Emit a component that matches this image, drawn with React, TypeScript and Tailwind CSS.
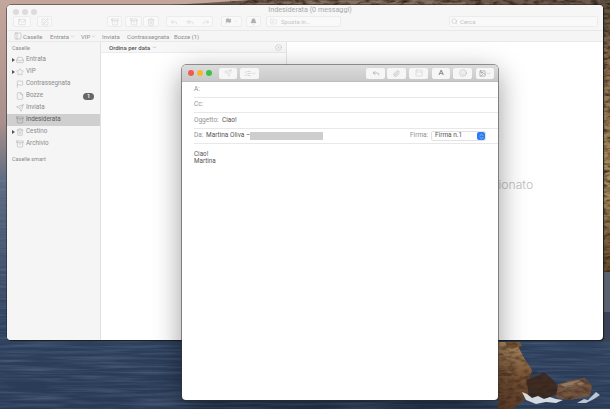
import React from "react";
import {
  Mail, SquarePen, Archive, Trash2, Reply, ReplyAll, Forward, Flag, Bell, FolderInput, Search,
  PanelLeft, Inbox, Star, File, Send, Paperclip, Smile, Image, ListChecks, CircleX, ChevronDown,
  ChevronsUpDown, PanelTop,
} from "lucide-react";

function Wallpaper() {
  return (
    <svg className="absolute inset-0" width="610" height="409" viewBox="0 0 610 409">
      <defs>
        <linearGradient id="sky" x1="0" y1="0" x2="0" y2="1">
          <stop offset="0" stopColor="#c4a79b" />
          <stop offset="0.3" stopColor="#a8908c" />
          <stop offset="0.45" stopColor="#5c6a80" />
          <stop offset="0.8" stopColor="#2d405d" />
          <stop offset="1" stopColor="#293a55" />
        </linearGradient>
        <linearGradient id="rockR" x1="0" y1="0" x2="0" y2="1">
          <stop offset="0" stopColor="#5a4b3c" />
          <stop offset="0.25" stopColor="#8f7250" />
          <stop offset="0.7" stopColor="#ab9060" />
          <stop offset="1" stopColor="#64482e" />
        </linearGradient>
        <linearGradient id="bigRock" x1="0" y1="0" x2="0" y2="1">
          <stop offset="0" stopColor="#b08d62" />
          <stop offset="0.5" stopColor="#7a5436" />
          <stop offset="1" stopColor="#5e3d2a" />
        </linearGradient>
        <filter id="waves" x="0" y="0" width="100%" height="100%" colorInterpolationFilters="sRGB">
          <feTurbulence type="fractalNoise" baseFrequency="0.015 0.35" numOctaves="3" seed="4" />
          <feColorMatrix type="matrix" values="0 0 0 0 0.50  0 0 0 0 0.58  0 0 0 0 0.70  1.6 0 0 0 -0.62" />
        </filter>
        <filter id="mottle" x="0" y="0" width="100%" height="100%" colorInterpolationFilters="sRGB">
          <feTurbulence type="fractalNoise" baseFrequency="0.12 0.3" numOctaves="3" seed="9" />
          <feColorMatrix type="matrix" values="0 0 0 0 0.16  0 0 0 0 0.11  0 0 0 0 0.08  2.0 0 0 0 -0.8" />
        </filter>
        <clipPath id="rocks">
          <path d="M498 342 L516 342 L524 358 L532 370 L545 373 L553 380 L558 384 L572 380 L585 378 L592 386 L590 396 L570 400 L530 398 L528 398 L512 409 L498 409 Z" />
        </clipPath>
      </defs>
      <rect width="610" height="409" fill="url(#sky)" />
      <rect x="0" y="180" width="610" height="229" filter="url(#waves)" opacity="0.4" />
      <path d="M170 5 L205 3 L250 0 L610 0 L610 5 Z" fill="#6d5a4c" />
      <path d="M225 5 L300 1 L420 0 L480 3 L520 5 Z" fill="#86705f" />
      <rect x="600" y="0" width="10" height="272" fill="url(#rockR)" />
      <rect x="600" y="0" width="10" height="272" filter="url(#mottle)" />
      <rect x="230" y="0" width="380" height="5" filter="url(#mottle)" />
      <rect x="603" y="272" width="7" height="40" fill="#59616e" />
      <rect x="603" y="312" width="7" height="30" fill="#3a4356" />
      <path d="M498 342 L516 342 L524 358 L532 370 L528 385 L528 398 L512 409 L498 409 Z" fill="url(#bigRock)" />
      <path d="M505 342 L520 342 L522 346 L512 349 L507 347 Z" fill="#7b5838" />
      <path d="M526 380 L545 373 L553 380 L560 392 L548 398 L530 398 Z" fill="#3f2c23" />
      <path d="M556 398 L558 384 L572 380 L585 378 L592 386 L590 396 L570 400 Z" fill="#755640" />
      <path d="M560 384 L580 380 L584 384 L566 388 Z" fill="#947a60" />
      <g clipPath="url(#rocks)">
        <rect x="498" y="342" width="100" height="67" filter="url(#mottle)" opacity="0.6" />
      </g>
      <path d="M522 392 L527 394 L532 398 L538 396 L544 399 L550 397 L556 399 L563 400 L556 403 L546 402 L536 404 L526 400 Z" fill="#d5dbe2" />
      <path d="M577 403 L584 399 L588 400 L592 396 L596 392 L600 395 L594 399 L586 403 Z" fill="#bcc6d2" />
    </svg>
  );
}

const T = "font-['Roboto','Liberation_Sans',sans-serif]";

function ToolBtn({ w, children }: { w: string; children?: React.ReactNode }) {
  return (
    <div className={`${w} h-[11px] flex items-center justify-center gap-px rounded-[2px] border border-[#ececec] bg-[#f9f9f9] text-[#b5b5b5]`}>
      {children}
    </div>
  );
}

function SideRow({ icon, label, arrow, active, badge }: { icon: React.ReactNode; label: string; arrow?: boolean; active?: boolean; badge?: string }) {
  return (
    <div className={`h-[12px] flex items-center pl-[3px] pr-[6px] ${active ? "bg-[#cfcfcf]" : ""}`}>
      <div className="w-[6px] flex justify-center">
        {arrow && <div className="w-0 h-0 border-y-[2.5px] border-y-transparent border-l-[3px] border-l-[#555]" />}
      </div>
      <div className={`w-[8px] flex justify-center ${active ? "text-[#666]" : "text-[#8a8a8a]"}`}>{icon}</div>
      <span className={`ml-[2px] text-[6.3px] ${active ? "text-[#5c5c5c]" : "text-[#8c8c8c]"}`}>{label}</span>
      {badge && (
        <span className="ml-auto w-[11px] h-[7px] rounded-full bg-[#666] text-white text-[5.5px] font-semibold flex items-center justify-center">{badge}</span>
      )}
    </div>
  );
}

function FieldRow({ children, h = "h-[15px]" }: { children?: React.ReactNode; h?: string }) {
  return <div className={`${h} ml-[12px] flex items-center whitespace-nowrap border-b border-[#e8e8e8]`}>{children}</div>;
}

function ComposeBtn({ w = "w-[19px]", children }: { w?: string; children: React.ReactNode }) {
  return (
    <div className={`${w} h-[11px] rounded-[2px] bg-[#f6f6f6] flex items-center justify-center text-[#8c8c8c]`}>{children}</div>
  );
}

export default function App() {
  const ic = { size: 8, strokeWidth: 1 };
  const sb = { size: 8, strokeWidth: 1 };
  return (
    <div className={`relative w-[610px] h-[409px] overflow-hidden ${T}`}>
      <Wallpaper />

      {/* Mail main window */}
      <div className="absolute left-[7px] top-[5px] w-[596px] h-[335px] rounded-[4px] overflow-hidden bg-white flex flex-col shadow-[0_0_0_0.5px_#222,1px_1px_1px_#1a1a1a]">
        <div className="h-[25px] bg-[#f6f6f6] relative flex items-end pb-[3px] pl-[6px]">
          <div className="absolute left-[6px] top-[4px] flex gap-[3px]">
            <div className="w-[6px] h-[6px] rounded-full bg-[#dcdcdc]" />
            <div className="w-[6px] h-[6px] rounded-full bg-[#dcdcdc]" />
            <div className="w-[6px] h-[6px] rounded-full bg-[#dcdcdc]" />
          </div>
          <div className="absolute left-0 right-0 top-[1px] h-[8px] pl-[10px] flex items-center justify-center text-[7.2px] text-[#aaaaaa]">
            Indesiderata (0 messaggi)
          </div>
          <ToolBtn w="w-[18px] ml-[0px]"><Mail {...ic} /></ToolBtn>
          <ToolBtn w="w-[15px] ml-[6px]"><SquarePen {...ic} /></ToolBtn>
          <ToolBtn w="w-[15px] ml-[55px]"><Archive {...ic} /></ToolBtn>
          <ToolBtn w="w-[17px] ml-[3px]"><Archive {...ic} /></ToolBtn>
          <ToolBtn w="w-[16px] ml-[1px]"><Trash2 {...ic} /></ToolBtn>
          <ToolBtn w="w-[47px] ml-[7px]">
            <div className="flex gap-[8px]"><Reply {...ic} /><ReplyAll {...ic} /><Forward {...ic} /></div>
          </ToolBtn>
          <ToolBtn w="w-[21px] ml-[8px]"><Flag size={7} strokeWidth={1} fill="#b0b0b0" /><ChevronDown size={5} strokeWidth={1} /></ToolBtn>
          <ToolBtn w="w-[15px] ml-[4px]"><Bell size={7} strokeWidth={1} fill="#b0b0b0" /></ToolBtn>
          <div className="w-[75px] h-[11px] ml-[5px] rounded-[2px] border border-[#ececec] bg-[#f9f9f9] flex items-center pl-[3px] gap-[4px] text-[#c4c4c4]">
            <FolderInput size={7} strokeWidth={1} />
            <span className="text-[6px]">Sposta in...</span>
          </div>
          <div className="w-[149px] h-[11px] ml-[108px] rounded-[2px] border border-[#ececec] bg-[#f9f9f9] flex items-center pl-[1px] gap-[2px] text-[#b5b5b5]">
            <Search size={7} strokeWidth={1.4} />
            <span className="text-[6px] text-[#c4c4c4]">Cerca</span>
          </div>
        </div>

        <div className="h-[12px] bg-[#f5f5f5] border-y border-[#e8e8e8] flex items-center text-[6px] text-[#8e8e8e]">
          <PanelLeft size={8} strokeWidth={1} className="ml-[7px] mr-[1px]" />
          <span className="w-[27px]">Caselle</span>
          <span className="w-[31px] flex items-center">Entrata<ChevronDown size={5} strokeWidth={1.2} className="ml-[1px]" /></span>
          <span className="w-[21px] flex items-center">VIP<ChevronDown size={5} strokeWidth={1.2} className="ml-[1px]" /></span>
          <span className="w-[25px]">Inviata</span>
          <span className="w-[47px]">Contrassegnata</span>
          <span>Bozze (1)</span>
        </div>

        <div className="flex-1 flex min-h-0">
          <div className="w-[94px] bg-[#f5f5f5] border-r border-[#e2e2e2] pt-[1px]">
            <div className="h-[11px] pl-[5px] flex items-center text-[5.5px] text-[#8a8a8a]">Caselle</div>
            <SideRow icon={<Inbox {...sb} />} label="Entrata" arrow />
            <SideRow icon={<Star {...sb} />} label="VIP" arrow />
            <SideRow icon={<Flag {...sb} />} label="Contrassegnata" />
            <SideRow icon={<File {...sb} />} label="Bozze" badge="1" />
            <SideRow icon={<Send {...sb} />} label="Inviata" />
            <SideRow icon={<Archive {...sb} />} label="Indesiderata" active />
            <SideRow icon={<Trash2 {...sb} />} label="Cestino" arrow />
            <SideRow icon={<Archive {...sb} />} label="Archivio" />
            <div className="h-[11px] mt-[4px] pl-[5px] flex items-center text-[5.5px] text-[#8a8a8a]">Caselle smart</div>
          </div>
          <div className="w-[186px] border-r border-[#e6e6e6] flex flex-col">
            <div className="h-[11px] bg-[#f7f7f7] border-b border-[#ececec] flex items-center pl-[8px] pr-[4px] text-[6px] font-medium text-[#555]">
              Ordina per data
              <ChevronDown size={5} strokeWidth={1.4} className="ml-[2px]" />
              <CircleX size={7} strokeWidth={1} className="ml-auto text-[#999]" />
            </div>
          </div>
          <div className="flex-1 flex items-center justify-center pb-[11px] font-['Inter',sans-serif] text-[12.2px] font-light text-[#bdbdbd]">
            Nessun messaggio selezionato
          </div>
        </div>
      </div>

      {/* Compose window */}
      <div className="absolute left-[182px] top-[65px] w-[316px] h-[335px] rounded-[4px] overflow-hidden bg-white flex flex-col shadow-[0_0_0_0.5px_#333,0_8px_28px_rgba(0,0,0,0.42)]">
        <div className="h-[17px] bg-gradient-to-b from-[#dcdcdc] to-[#c9c9c9] border-b border-[#bdbdbd] flex items-center">
          <div className="ml-[6px] w-[6px] h-[6px] rounded-full bg-[#ee5b52]" />
          <div className="ml-[3px] w-[6px] h-[6px] rounded-full bg-[#f5b82e]" />
          <div className="ml-[3px] w-[6px] h-[6px] rounded-full bg-[#3fc04c]" />
          <ComposeBtn w="w-[18px] ml-[7px]"><Send size={8} strokeWidth={1} className="text-[#b5b5b5]" /></ComposeBtn>
          <ComposeBtn w="w-[19px] ml-[3px]"><ListChecks size={7} strokeWidth={1} /><ChevronDown size={5} strokeWidth={1.4} /></ComposeBtn>
          <ComposeBtn w="w-[19px] ml-[107px]"><Reply size={8} strokeWidth={1.5} /></ComposeBtn>
          <ComposeBtn w="w-[19px] ml-[2px]"><Paperclip size={7} strokeWidth={1.2} /></ComposeBtn>
          <ComposeBtn w="w-[19px] ml-[3px]"><PanelTop size={8} strokeWidth={1} className="text-[#b5b5b5]" /></ComposeBtn>
          <ComposeBtn w="w-[18px] ml-[4px]"><span className="text-[8px] text-[#666]">A</span></ComposeBtn>
          <ComposeBtn w="w-[19px] ml-[3px]"><Smile size={8} strokeWidth={1} /></ComposeBtn>
          <ComposeBtn w="w-[18px] ml-[4px]"><Image size={7} strokeWidth={1.2} className="text-[#555]" /><ChevronDown size={5} strokeWidth={1.4} /></ComposeBtn>
        </div>
        <FieldRow h="h-[16px]"><span className="text-[6.5px] text-[#909090]">A:</span></FieldRow>
        <FieldRow><span className="text-[6.5px] text-[#909090]">Cc:</span></FieldRow>
        <FieldRow h="h-[16px]">
          <span className="w-[28px] text-[6.5px] text-[#909090]">Oggetto:</span>
          <span className="text-[6.5px] text-[#555]">Ciao!</span>
        </FieldRow>
        <FieldRow>
          <span className="w-[12px] text-[6.5px] text-[#909090]">Da:</span>
          <span className="w-[44px] text-[6.5px] text-[#555]">Martina Oliva –</span>
          <div className="w-[73px] h-[8px] bg-[#cdcdcd]" />
          <span className="ml-[87px] w-[21px] text-[6.5px] text-[#909090]">Firma:</span>
          <div className="w-[55px] h-[10px] rounded-[2px] border border-[#e2e2e2] flex items-center pl-[3px] text-[6.5px] text-[#555] bg-white">
            Firma n.1
            <div className="ml-auto w-[8px] h-full rounded-[2px] bg-[#2f7cf0] text-white flex items-center justify-center">
              <ChevronsUpDown size={7} strokeWidth={1.5} />
            </div>
          </div>
        </FieldRow>
        <div className="pl-[12px] pt-[7px] text-[6.3px] leading-[6.5px] text-[#555]">
          <div>Ciao!</div>
          <div>Martina</div>
        </div>
      </div>
    </div>
  );
}
